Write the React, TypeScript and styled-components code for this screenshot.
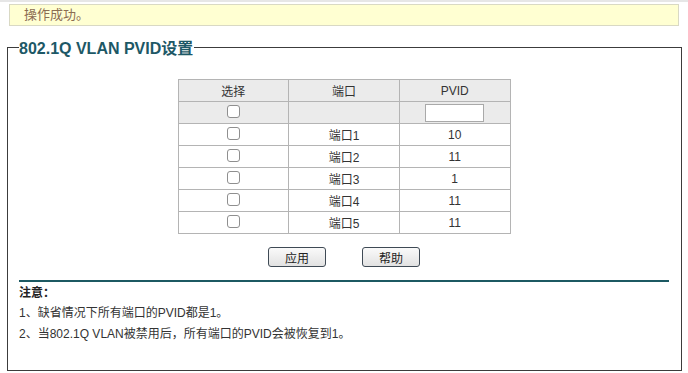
import React from 'react';
import styled, { createGlobalStyle } from 'styled-components';

const ports = [
  { name: '端口1', pvid: 10 },
  { name: '端口2', pvid: 11 },
  { name: '端口3', pvid: 1 },
  { name: '端口4', pvid: 11 },
  { name: '端口5', pvid: 11 },
];

const GlobalStyle = createGlobalStyle`
  body {
    margin: 0;
    background: #fff;
    font-family: "Liberation Sans", Arial, "Noto Sans CJK SC", sans-serif;
    font-size: 12px;
    color: #333;
  }
`;

const App = () => {
  return (
    <>
      <GlobalStyle />
      <Page>
        <Message>操作成功。</Message>
        <Panel>
          <Title>802.1Q VLAN PVID设置</Title>
          <Grid>
            <thead>
              <tr>
                <Head>选择</Head>
                <Head>端口</Head>
                <Head>PVID</Head>
              </tr>
            </thead>
            <tbody>
              <tr>
                <Cell $shaded>
                  <Check type="checkbox" />
                </Cell>
                <Cell $shaded />
                <Cell $shaded>
                  <PvidInput type="text" />
                </Cell>
              </tr>
              {ports.map((p) => (
                <tr key={p.name}>
                  <Cell>
                    <Check type="checkbox" />
                  </Cell>
                  <Cell>{p.name}</Cell>
                  <Cell>{p.pvid}</Cell>
                </tr>
              ))}
            </tbody>
          </Grid>
          <Actions>
            <Button type="button">应用</Button>
            <Button type="button">帮助</Button>
          </Actions>
          <Notes>
            <NoteTitle>注意：</NoteTitle>
            <NoteLine>1、缺省情况下所有端口的PVID都是1。</NoteLine>
            <NoteLine>2、当802.1Q VLAN被禁用后，所有端口的PVID会被恢复到1。</NoteLine>
          </Notes>
        </Panel>
      </Page>
    </>
  );
};

const Page = styled.div`
  border-top: 2px solid #e6e6e6;
  padding: 2px 0 3px;
`;

const Message = styled.div`
  margin: 0 9px;
  height: 20px;
  line-height: 20px;
  padding-left: 14px;
  background: #ffffd2;
  border: 1px solid #d9d9c4;
  color: #8c6d52;
  font-size: 13px;
`;

const Panel = styled.fieldset`
  margin: 9px 6px 0 7px;
  padding: 0 12px 0 11px;
  border: 1px solid #3c3c3c;
  height: 336px;
  box-sizing: border-box;
`;

const Title = styled.legend`
  margin: 0;
  padding: 0 1px 0 0;
  font-size: 16px;
  font-weight: bold;
  color: #1d5866;
`;

const Grid = styled.table`
  margin: 20px auto 0;
  width: 333px;
  border-collapse: collapse;
  border: 1px solid #adadad;
`;

const Head = styled.th`
  width: 33.3%;
  height: 21px;
  padding: 0;
  border: 1px solid #b4b4b4;
  background: #ebebeb;
  font-weight: normal;
  font-size: 12px;
  color: #333;
`;

const Cell = styled.td<{ $shaded?: boolean }>`
  height: 21px;
  padding: 0;
  border: 1px solid #b4b4b4;
  background: ${(p) => (p.$shaded ? '#ebebeb' : '#fff')};
  text-align: center;
  font-size: 12px;
  color: #333;
`;

const Check = styled.input`
  appearance: none;
  display: block;
  margin: 0 auto 3px;
  width: 13px;
  height: 13px;
  border: 1px solid #8f8f8f;
  border-radius: 3px;
  background: #fff;
`;

const PvidInput = styled.input`
  display: block;
  margin: 0 auto;
  box-sizing: border-box;
  width: 59px;
  height: 18px;
  border: 1px solid #a9a9a9;
  padding: 0;
`;

const Actions = styled.div`
  display: flex;
  justify-content: center;
  gap: 36px;
  margin-top: 13px;
  padding-bottom: 13px;
  border-bottom: 2px solid #1c5962;
`;

const Button = styled.button`
  width: 58px;
  height: 20px;
  padding: 0;
  border: 1px solid #3f4a55;
  border-radius: 3px;
  background: linear-gradient(#fafafa, #e2e2e2);
  font-family: "Liberation Sans", Arial, "Noto Sans CJK SC", sans-serif;
  font-size: 12px;
  color: #222;
`;

const Notes = styled.div`
  padding-top: 1px;
`;

const NoteTitle = styled.div`
  font-weight: bold;
  line-height: 20px;
  color: #222;
`;

const NoteLine = styled.div`
  line-height: 21px;
  color: #333;
`;

export default App;
